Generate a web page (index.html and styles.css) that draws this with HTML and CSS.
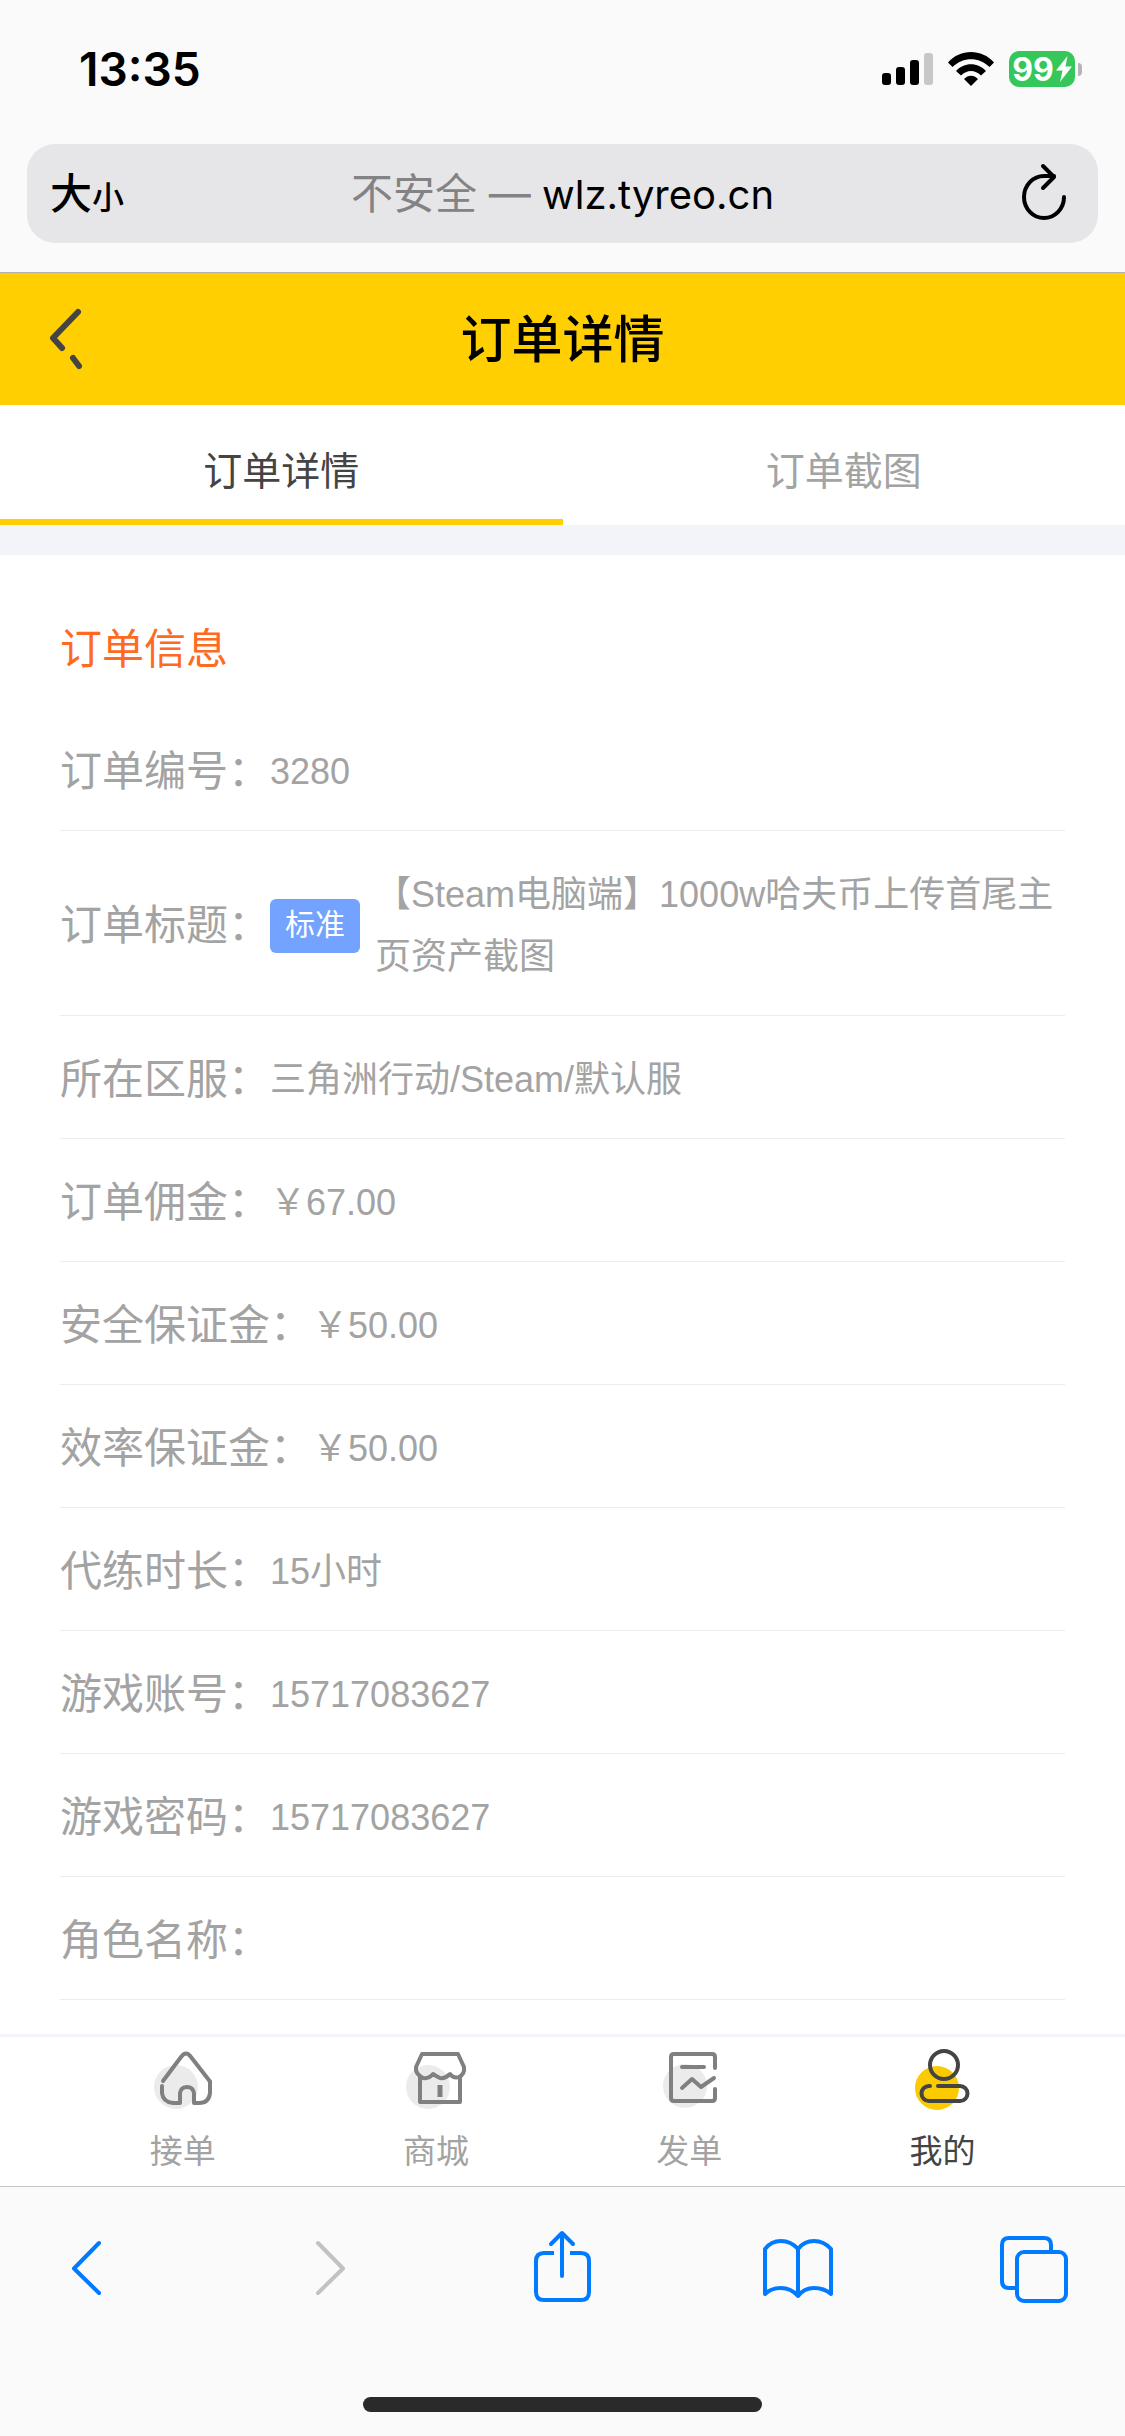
FILE: index.html
```html
<!DOCTYPE html>
<html lang="zh-CN">
<head>
    <meta charset="UTF-8">
    <meta name="viewport" content="width=device-width, initial-scale=1.0">
    <title>订单详情</title>
    <link rel="stylesheet" href="styles.css">
</head>
<body>
    <div class="browser-top">
        <div class="status-bar">
            <span class="time">13:35</span>
            <div class="status-icons">
                <svg width="51" height="36" viewBox="0 0 51 36">
                    <rect x="0" y="22" width="9" height="12" rx="3"/>
                    <rect x="14" y="16" width="9" height="18" rx="3"/>
                    <rect x="28" y="9" width="9" height="25" rx="3"/>
                    <rect x="42" y="2" width="9" height="32" rx="3" fill="#c7c7c7"/>
                </svg>
                <svg width="46" height="36" viewBox="0 0 46 36">
                    <path d="M0 11.500C12-2.500 34-2.500 46 11.500L41.500 16C31 5.500 15 5.500 4.500 16Z"/>
                    <path d="M8 20C16 11 30 11 38 20L33 24.500C27 18.500 19 18.500 13 24.500Z"/>
                    <path d="M16 28C20 23.500 26 23.500 30 28L23 35Z"/>
                </svg>
                <div class="battery">
                    <span class="battery-level">99<svg width="16" height="26" viewBox="0 0 16 26"><path d="M11.500 0L0 14.500H6.500L4 26L16 10.500H9.500Z" fill="#fff"/></svg></span>
                    <span class="battery-tip"></span>
                </div>
            </div>
        </div>
        <div class="address-bar">
            <button class="text-size" aria-label="文字大小"><span class="big">大</span><span class="small">小</span></button>
            <button class="address"><span class="insecure">不安全 —</span> wlz.tyreo.cn</button>
            <button class="reload" aria-label="刷新">
                <svg width="46" height="56" viewBox="0 0 46 56" fill="none" stroke="#000" stroke-width="4" stroke-linecap="round" stroke-linejoin="round">
                    <path d="M43 34A20 21 0 1 1 23 13H33"/>
                    <path d="M22 3L33 14L22 25"/>
                </svg>
            </button>
        </div>
    </div>

    <header class="page-header">
        <button class="back" aria-label="返回">
            <svg width="36" height="60" viewBox="0 0 36 60" fill="none" stroke="#444" stroke-width="6" stroke-linecap="round" stroke-linejoin="round">
                <path d="M28 3L3 29L12 39"/>
                <path d="M23 49L29 57"/>
            </svg>
        </button>
        <h1>订单详情</h1>
    </header>

    <nav class="tabs">
        <button class="tab active">订单详情</button>
        <button class="tab">订单截图</button>
    </nav>

    <main class="content">
        <h2>订单信息</h2>
        <dl class="order-info">
            <div class="row">
                <dt>订单编号：</dt>
                <dd>3280</dd>
            </div>
            <div class="row">
                <dt>订单标题：</dt>
                <dd class="order-title">
                    <span class="tag">标准</span>
                    <span class="title-text">【Steam电脑端】1000w哈夫币上传首尾主页资产截图</span>
                </dd>
            </div>
            <div class="row">
                <dt>所在区服：</dt>
                <dd>三角洲行动/Steam/默认服</dd>
            </div>
            <div class="row">
                <dt>订单佣金：</dt>
                <dd>￥67.00</dd>
            </div>
            <div class="row">
                <dt>安全保证金：</dt>
                <dd>￥50.00</dd>
            </div>
            <div class="row">
                <dt>效率保证金：</dt>
                <dd>￥50.00</dd>
            </div>
            <div class="row">
                <dt>代练时长：</dt>
                <dd>15小时</dd>
            </div>
            <div class="row">
                <dt>游戏账号：</dt>
                <dd>15717083627</dd>
            </div>
            <div class="row">
                <dt>游戏密码：</dt>
                <dd>15717083627</dd>
            </div>
            <div class="row">
                <dt>角色名称：</dt>
                <dd></dd>
            </div>
        </dl>
    </main>

    <nav class="app-nav">
        <a href="#">
            <svg viewBox="0 0 60 60">
                <circle class="dot" cx="23" cy="37" r="22"/>
                <path d="M10 31L28 7Q33 0 38 7L57 31.500V43Q56 53 46 53H41V43Q40 37 34 37T27 43V53H20Q10 52 9 43V36"/>
            </svg>
            <span>接单</span>
        </a>
        <a href="#">
            <svg viewBox="0 0 60 60">
                <circle class="dot" cx="22" cy="37" r="22"/>
                <path d="M16 4H52L58 17Q59 24 53 27Q48 29 44 24Q39 29 34 28Q30 26 27 24Q23 29 17 28Q9 24 10 17Z"/>
                <path d="M14 27V52H54V27"/>
                <path class="door" d="M34 35V47"/>
            </svg>
            <span>商城</span>
        </a>
        <a href="#">
            <svg viewBox="0 0 60 60">
                <circle class="dot" cx="26" cy="36" r="22"/>
                <path d="M56 18V7Q56 4 53 4H15Q12 4 12 7V48Q12 51 15 51H53Q56 51 56 48V39"/>
                <path d="M23 17H45"/>
                <path d="M23 38L33 29L42 37L55 28"/>
            </svg>
            <span>发单</span>
        </a>
        <a href="#" class="active">
            <svg viewBox="0 0 60 60">
                <circle class="dot" cx="25" cy="38" r="22"/>
                <circle cx="32" cy="15" r="14"/>
                <path d="M18 36H17A7 7 0 0 0 17 51H48A7 7 0 0 0 48 36H26"/>
            </svg>
            <span>我的</span>
        </a>
    </nav>

    <footer class="browser-bottom">
        <div class="toolbar">
            <button aria-label="后退"><svg viewBox="0 0 72 72"><path d="M47 10L22 35.500L47 60"/></svg></button>
            <button aria-label="前进" disabled><svg viewBox="0 0 72 72"><path d="M30 10L55 35.500L30 60"/></svg></button>
            <button aria-label="分享"><svg viewBox="0 0 72 72"><path class="flat" d="M29 20H19Q11 20 11 28V59Q11 67 19 67H56Q64 67 64 59V28Q64 20 56 20H45"/><path d="M37 43V1M26 11L37 0L48 11"/></svg></button>
            <button aria-label="书签"><svg viewBox="0 0 72 72"><path d="M37 16Q30 8 20 8T4 16V61Q10 55 20 55T37 63Q43 55 53 55T70 61V16Q63 8 53 8T37 16V63"/></svg></button>
            <button aria-label="标签页"><svg viewBox="0 0 72 72"><path class="flat" d="M54 19V12Q54 5 47 5H12Q5 5 5 12V48Q5 55 12 55H20"/><rect x="20" y="19" width="49" height="49" rx="7"/></svg></button>
        </div>
        <div class="home-indicator"></div>
    </footer>
</body>
</html>
```
FILE: styles.css
```css
* {
    box-sizing: border-box;
}
body {
    display: flex;
    flex-direction: column;
    min-height: 100vh;
    margin: 0;
    font-family: "Liberation Sans", "Noto Sans CJK SC", sans-serif;
    color: #a3a3a3;
    background-color: #fff;
}
button {
    padding: 0;
    border: none;
    background: none;
    font: inherit;
    color: inherit;
    cursor: pointer;
}
svg {
    display: block;
    overflow: visible;
}
h1, h2, dl, dd {
    margin: 0;
}

/* Browser top */
.browser-top {
    padding: 0 27px 29px;
    background-color: #fafafa;
    border-bottom: 1px solid #b0b0b0;
    color: #000;
}
.status-bar {
    display: flex;
    align-items: center;
    justify-content: space-between;
    height: 144px;
    padding: 0 16px 6px 52px;
}
.time {
    font-family: Inter, sans-serif;
    font-size: 46px;
    font-weight: 600;
}
.status-icons {
    display: flex;
    align-items: center;
    gap: 15px;
}
.battery {
    display: flex;
    align-items: center;
    gap: 3px;
}
.battery-level {
    display: flex;
    align-items: center;
    justify-content: center;
    gap: 2px;
    width: 66px;
    height: 36px;
    border-radius: 10px;
    background-color: #35c759;
    color: #fff;
    font-family: Inter, sans-serif;
    font-size: 32px;
    font-weight: 700;
}
.battery-tip {
    width: 4px;
    height: 13px;
    border-radius: 0 4px 4px 0;
    background-color: #b5b5b7;
}
.address-bar {
    display: flex;
    align-items: center;
    justify-content: space-between;
    height: 99px;
    padding: 0 31px 6px 23px;
    border-radius: 28px;
    background-color: #e6e6e8;
}
.text-size {
    display: flex;
    align-items: baseline;
    width: 74px;
    font-weight: 500;
}
.text-size .big {
    font-size: 42px;
}
.text-size .small {
    font-size: 32px;
}
.address {
    padding-left: 8px;
    font-family: Inter, "Noto Sans CJK SC", sans-serif;
    font-size: 40px;
}
.insecure {
    color: #838385;
    font-size: 42px;
}
.reload {
    display: flex;
    justify-content: flex-end;
    width: 74px;
}

/* Page header */
.page-header {
    display: grid;
    grid-template-columns: 36px 1fr 36px;
    align-items: center;
    height: 132px;
    padding: 0 50px;
    background-color: #ffcf01;
}
.page-header h1 {
    padding-bottom: 6px;
    color: #000;
    font-size: 51px;
    font-weight: 500;
    text-align: center;
}
.tabs {
    display: flex;
    border-bottom: 30px solid #f3f4f9;
}
.tab {
    flex: 1;
    height: 120px;
    padding-top: 12px;
    border-bottom: 6px solid transparent;
    font-size: 39px;
}
.tab.active {
    border-bottom-color: #ffcf01;
    color: #444;
}

/* Order details */
.content {
    flex: 1;
    padding: 62px 60px 30px;
}
.content h2 {
    margin-bottom: 25px;
    color: #ff6a22;
    font-size: 42px;
    font-weight: 400;
    line-height: 66px;
}
.row {
    display: flex;
    align-items: center;
    padding: 33px 0 27px;
    border-bottom: 1px solid #ececec;
}
.row dt {
    flex-shrink: 0;
    font-size: 42px;
    line-height: 62px;
}
.row dd {
    font-size: 36px;
    line-height: 62px;
}
.order-title {
    display: flex;
    align-items: center;
    gap: 15px;
}
.tag {
    flex-shrink: 0;
    width: 90px;
    height: 54px;
    border-radius: 6px;
    background-color: #73a3ff;
    color: #fff;
    font-size: 30px;
    line-height: 52px;
    text-align: center;
}

/* App navigation */
.app-nav {
    display: flex;
    padding: 0 56px;
    border-top: 3px solid #f3f4f9;
}
.app-nav a {
    display: flex;
    flex: 1;
    flex-direction: column;
    align-items: center;
    gap: 18px;
    height: 149px;
    padding-top: 13px;
    color: #a3a3a3;
    font-size: 33px;
    line-height: 48px;
    text-decoration: none;
}
.app-nav svg {
    width: 60px;
    height: 60px;
    fill: none;
    stroke: #808080;
    stroke-width: 4;
    stroke-linecap: round;
    stroke-linejoin: round;
}
.app-nav .dot {
    fill: #ebebeb;
    stroke: none;
}
.app-nav .door {
    stroke-width: 5;
    stroke-linecap: butt;
}
.app-nav a.active {
    color: #444;
}
.app-nav .active svg {
    stroke: #444;
}
.app-nav .active .dot {
    fill: #fbca00;
}

/* Browser bottom */
.browser-bottom {
    display: flex;
    flex-direction: column;
    align-items: center;
    justify-content: space-between;
    height: 250px;
    padding: 46px 52px 24px;
    border-top: 1px solid #c4c4c4;
    background-color: #fafafa;
}
.toolbar {
    display: flex;
    justify-content: space-between;
    width: 100%;
    padding-right: 4px;
}
.toolbar svg {
    width: 72px;
    height: 72px;
    fill: none;
    stroke: #007aff;
    stroke-width: 4;
    stroke-linecap: round;
    stroke-linejoin: round;
}
.toolbar .flat {
    stroke-linecap: butt;
}
.toolbar button:disabled svg {
    stroke: #c2c2c2;
}
.home-indicator {
    width: 39%;
    height: 15px;
    border-radius: 8px;
    background-color: #2a2a2a;
}
```
